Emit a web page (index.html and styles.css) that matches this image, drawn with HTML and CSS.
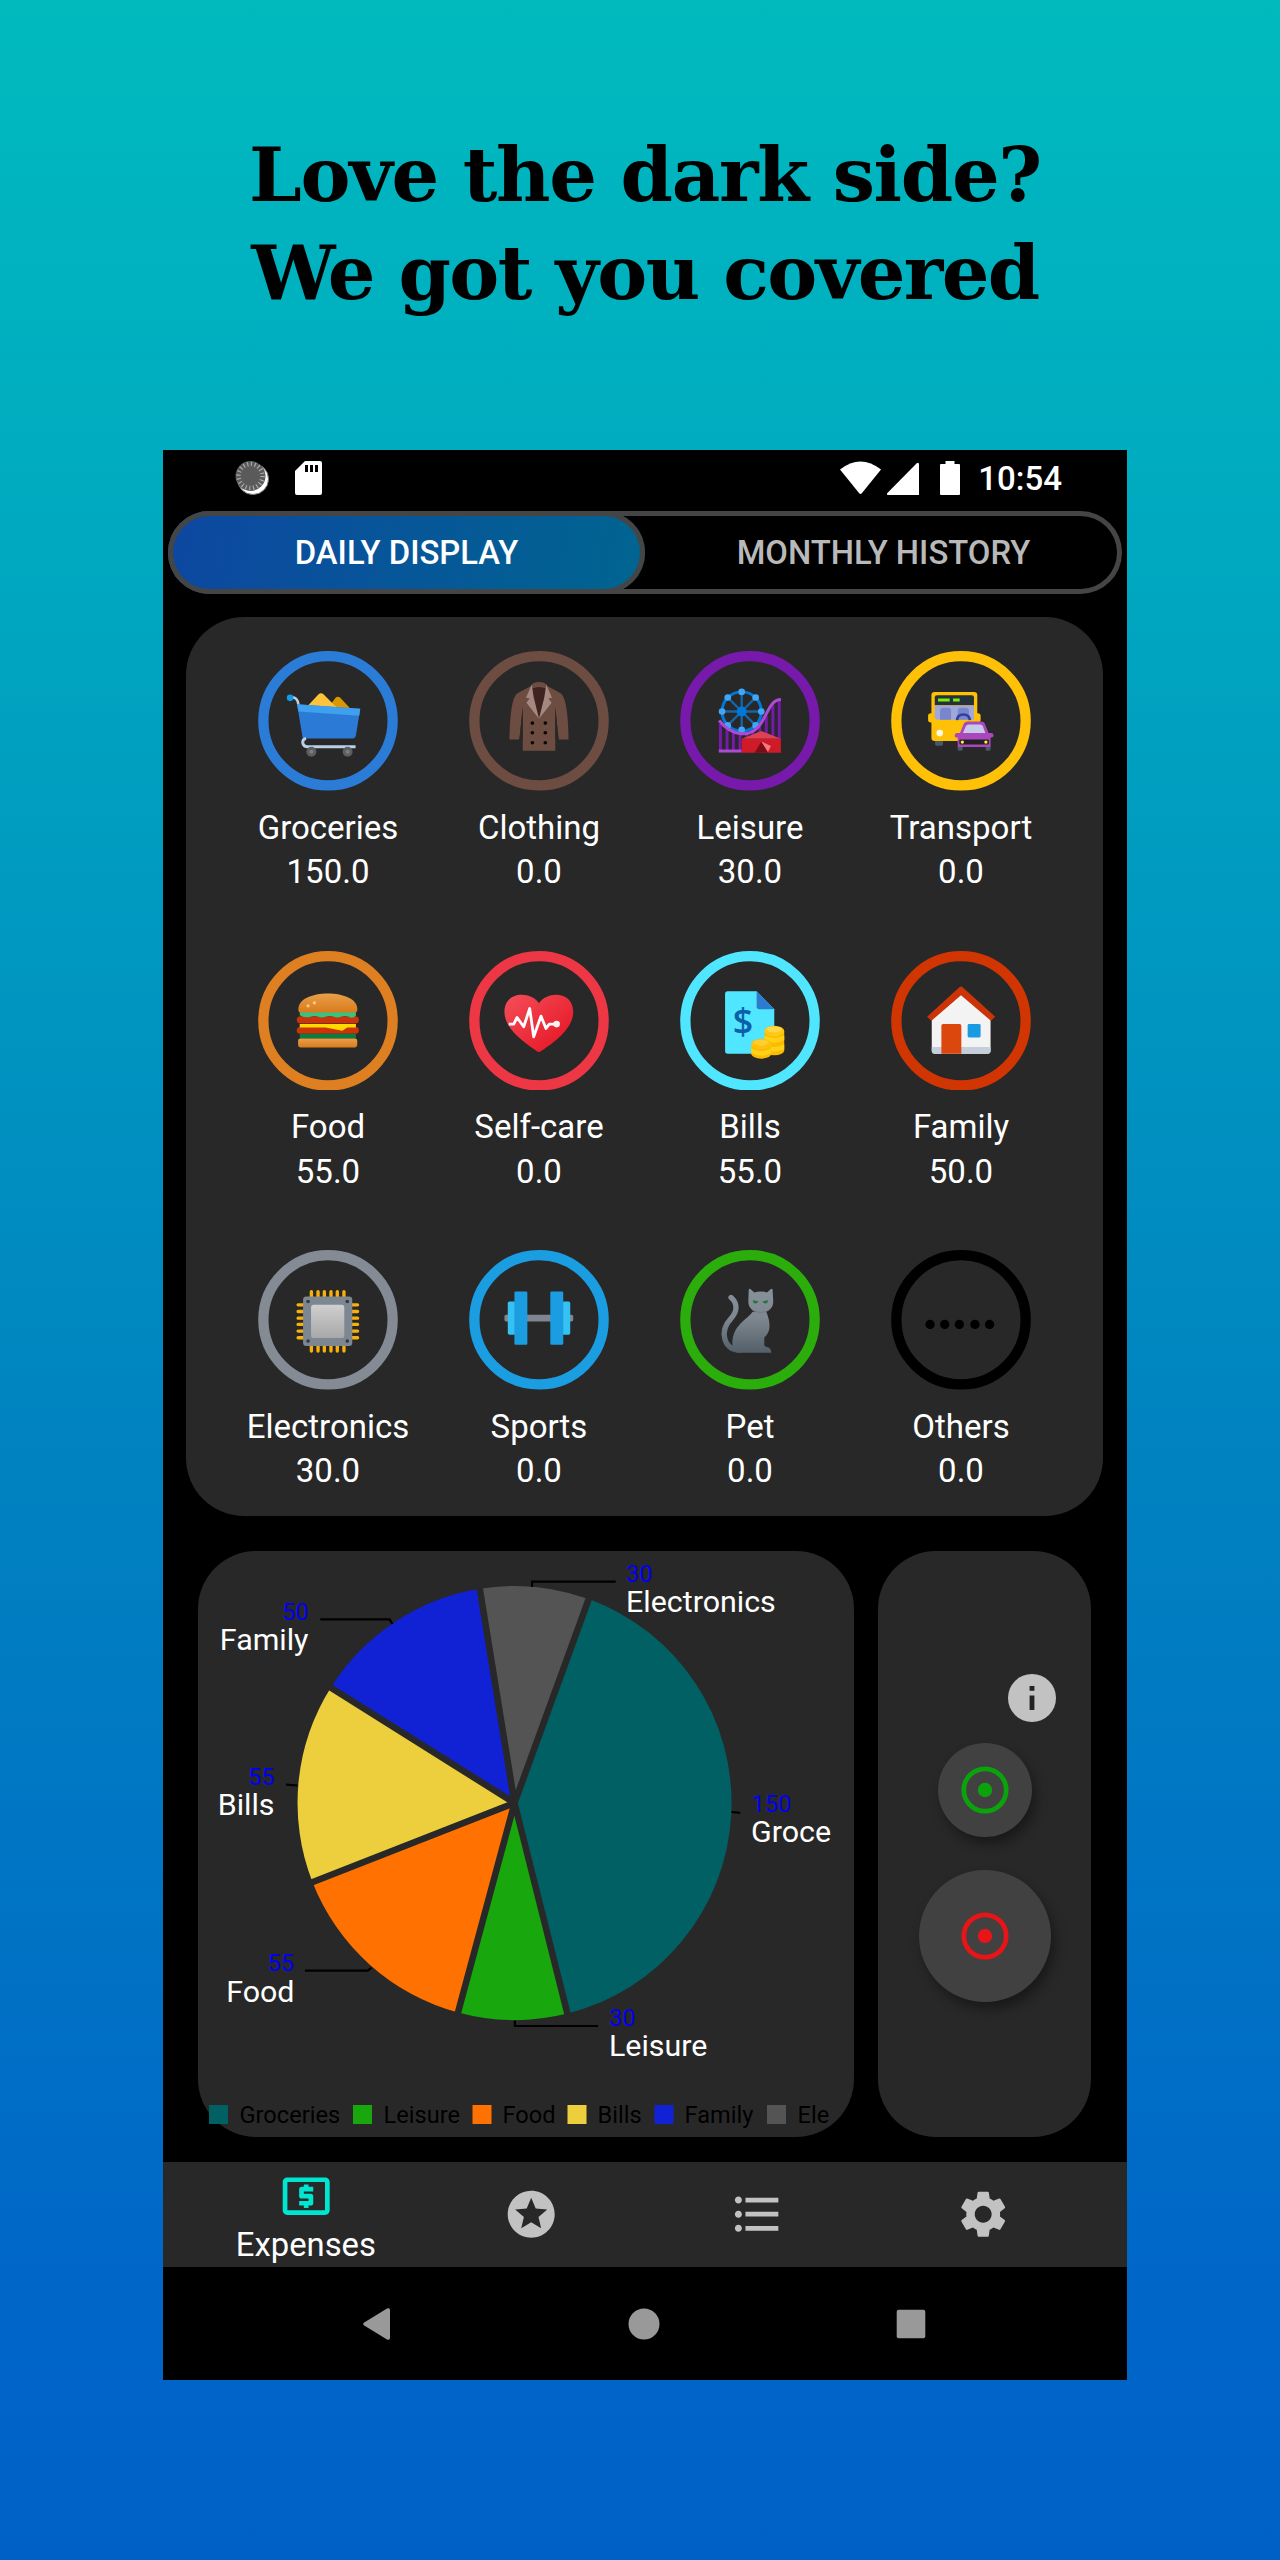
FILE: index.html
```html
<!DOCTYPE html>
<html lang="en">
<head>
<meta charset="utf-8">
<title>Expenses – dark theme</title>
<link rel="stylesheet" href="styles.css">
</head>
<body>
<main class="poster">
  <h1 class="headline"><span class="line-one">Love the dark side?</span><br><span class="line-two">We got you covered</span></h1>

  <section class="phone">
    <header class="status">
      <svg class="status-left" width="100" height="40" viewBox="231 458 100 40">
        <circle cx="253" cy="479" r="15.5" fill="#fff" stroke="#777" stroke-width="1"/>
        <circle cx="250.5" cy="476" r="15" fill="#5a5a5a"/>
        <circle cx="250.5" cy="476" r="12" fill="none" stroke="#aaa" stroke-width="4.5" stroke-dasharray="1.2 2.57"/>
        <path fill="#fff" d="M305 461H320a2 2 0 0 1 2 2V493a2 2 0 0 1-2 2H297a2 2 0 0 1-2-2V471Z"/>
        <path fill="#000" d="M305 465h3v7h-3zM310 465h3v7h-3zM315 465h3v7h-3z"/>
      </svg>
      <div class="status-right">
        <svg width="122" height="40" viewBox="839 458 122 40" fill="#fff">
          <path d="M840 469.500Q860.500 453.500 881 469.500L862 493Q860.500 494.800 859 493Z"/>
          <path d="M887.400 493L916.500 463.500Q919 461.800 919 464.500V495H888.500Q886 495 887.400 493Z"/>
          <path d="M945.500 461h9v3h4.500q1 0 1 1v29q0 1-1 1h-18q-1 0-1-1v-29q0-1 1-1h4.500z"/>
        </svg>
        <span class="clock">10:54</span>
      </div>
    </header>

    <div class="tabs">
      <div class="tab tab-active">DAILY DISPLAY</div>
      <div class="tab">MONTHLY HISTORY</div>
    </div>

    <div class="categories">
      <div class="category">
        <svg viewBox="237 123 420 420">
          <circle class="ring" cx="447" cy="333" r="194.500" stroke="#2b7cd6"/>
          <path d="M448 293L470 264Q476 258 484 264L514 296Z" fill="#d99800"/>
          <path d="M384 290L418 254Q426 246 434 254L474 294Z" fill="#fcc43c"/>
          <path d="M335 263Q356 260 358 285" fill="none" stroke="#b9cfe6" stroke-width="8"/>
          <circle cx="333" cy="264" r="10" fill="#149be6"/>
          <path d="M354 283L544 297L531 377Q529 386 520 386H371Z" fill="#2b7bd6"/>
          <path d="M354 283L544 297L541 318L358 305Z" fill="#3ea0ee"/>
          <path d="M381 386Q370 388 371 399Q373 411 386 411H530" fill="none" stroke="#b9cfe6" stroke-width="9"/>
          <circle cx="397" cy="426" r="15" fill="#5b5f62"/><circle cx="397" cy="426" r="6" fill="#7b7f82"/>
          <circle cx="506" cy="426" r="15" fill="#5b5f62"/><circle cx="506" cy="426" r="6" fill="#7b7f82"/>
        </svg>
        <span>Groceries</span><span>150.0</span>
      </div>
      <div class="category">
        <svg viewBox="869 123 420 420">
          <circle class="ring" cx="1079" cy="333" r="194.500" stroke="#6d4c41"/>
          <path d="M1055 228Q1060 216 1079 216Q1098 216 1104 228L1144 250Q1166 264 1168 389H1138L1128 294V423H1030V294L1020 389H990Q992 264 1014 250Z" fill="#6d4c41"/>
          <path d="M1058 236Q1079 226 1100 236L1094 290L1079 325L1066 290Z" fill="#3e2320"/>
          <path d="M1057 224L1040 264L1051 266L1041 279L1079 327L1063 262ZM1101 224L1118 264L1107 266L1117 279L1079 327L1095 262Z" fill="#a58880"/>
          <path d="M1030 290V389H1020ZM1128 290V389H1138Z" fill="#282828"/>
          <g fill="#080504"><circle cx="1059" cy="340" r="5.500"/><circle cx="1098" cy="340" r="5.500"/><circle cx="1059" cy="369" r="5.500"/><circle cx="1098" cy="369" r="5.500"/><circle cx="1059" cy="399" r="5.500"/><circle cx="1098" cy="399" r="5.500"/></g>
        </svg>
        <span>Clothing</span><span>0.0</span>
      </div>
      <div class="category">
        <svg viewBox="152 123 420 420">
          <circle class="ring" cx="362" cy="333" r="194.500" stroke="#7719aa"/>
          <circle cx="337" cy="305" r="59" fill="none" stroke="#0078d7" stroke-width="9"/>
          <path d="M337 246V364M278 305H396M295 263L379 347M379 263L295 347" stroke="#1565a8" stroke-width="7"/>
          <circle cx="337" cy="305" r="15" fill="#0078d7"/>
          <g fill="#42a5f5"><circle cx="337" cy="246" r="10"/><circle cx="295" cy="263" r="10"/><circle cx="379" cy="263" r="10"/><circle cx="278" cy="305" r="10"/><circle cx="396" cy="305" r="10"/><circle cx="295" cy="347" r="10"/><circle cx="379" cy="347" r="10"/><circle cx="337" cy="360" r="10"/></g>
          <path d="M273 342V422M293 355V422M312 366V422M332 371V422M352 371V380M371 365V380M391 350V372M411 318V375M431 285V380M450 270V390" stroke="#7719aa" stroke-width="9"/>
          <path d="M269 332C310 382 360 382 388 350C415 318 420 270 455 269" fill="none" stroke="#ae4bd5" stroke-width="9"/>
          <path d="M268 424H337" stroke="#ae4bd5" stroke-width="9"/>
          <path d="M337 387L396 364L455 387Z" fill="#dc4251"/>
          <path d="M337 387H455V429H337Z" fill="#cf1a28"/>
          <path d="M376 429L396 395L416 429Z" fill="#7d0d14"/>
          <path d="M396 395L425 409L416 427Z" fill="#f07983"/>
        </svg>
        <span>Leisure</span><span>30.0</span>
      </div>
      <div class="category">
        <svg viewBox="784 123 420 420">
          <circle class="ring" cx="994" cy="333" r="194.500" stroke="#ffc107"/>
          <rect x="916" y="388" width="24" height="20" rx="5" fill="#455a64"/>
          <rect x="895" y="310" width="158" height="28" rx="8" fill="#ffc107"/>
          <rect x="905" y="246" width="138" height="148" rx="10" fill="#ffc107"/>
          <path d="M915 286V262Q915 256 922 256H1026Q1033 256 1033 262V286Z" fill="#263238"/>
          <path d="M925 266H960V275H925ZM970 266H990V275H970Z" fill="#76ee12"/>
          <path d="M915 287H1033V330H924Q915 330 915 320Z" fill="#9fa8da"/>
          <path d="M931 330V304Q931 294 941 294H954Q964 294 964 304V330ZM984 330V304Q984 294 994 294H1008Q1018 294 1018 304V330Z" fill="#7986cb"/>
          <path d="M982 331Q983 314 1001 314Q1019 314 1021 331" fill="none" stroke="#303f9f" stroke-width="8"/>
          <circle cx="930" cy="370" r="10" fill="#fff9e0"/>
          <rect x="984" y="408" width="15" height="15" rx="4" fill="#455a64"/><rect x="1068" y="408" width="15" height="15" rx="4" fill="#455a64"/>
          <path d="M984 412V383H980Q974 383 975 377Q975 371 981 370H991L1001 345Q1005 335 1014 335H1055Q1064 335 1067 345L1077 370H1086Q1092 371 1092 377Q1092 383 1086 383H1083V412Z" fill="#ab47bc"/>
          <path d="M1000 370L1008 350Q1011 344 1017 344H1052Q1057 344 1060 350L1067 370Z" fill="#c5cae9"/>
          <rect x="989" y="389" width="89" height="15" rx="3" fill="#222"/>
          <circle cx="998" cy="397" r="5" fill="#ffeb3b"/><circle cx="1069" cy="397" r="5" fill="#ffeb3b"/>
        </svg>
        <span>Transport</span><span>0.0</span>
      </div>

      <div class="category">
        <svg viewBox="237 61 420 420">
          <defs>
            <linearGradient id="bun" x1="0" y1="0" x2="0" y2="1"><stop offset="0" stop-color="#e8a04a"/><stop offset="1" stop-color="#d97b1c"/></linearGradient>
          </defs>
          <circle class="ring" cx="447" cy="271" r="194.500" stroke="#de7f22"/>
          <path d="M353 268Q353 258 364 257H529Q540 258 540 268Q540 279 529 279H364Q353 279 353 268Z" fill="#cb3308"/>
          <path d="M362 244H531V256Q520 266 508 258Q498 254 486 259Q474 264 463 258Q452 254 440 259Q428 264 416 258Q406 254 394 259Q380 264 362 254Z" fill="#33c481"/>
          <path d="M358 240C350 172 543 172 535 240Q534 246 529 246H364Q359 246 358 240Z" fill="url(#bun)"/>
          <circle cx="387" cy="226" r="5" fill="#ffc878"/><circle cx="406" cy="217" r="5" fill="#ffc878"/>
          <rect x="353" y="290" width="187" height="20" rx="10" fill="#cb3308"/>
          <path d="M362 281H531V291H505L490 301L440 291H362Z" fill="#ffd900"/>
          <path d="M362 310H531V324H362Z" fill="#0b7d40"/>
          <rect x="357" y="324" width="178" height="27" rx="7" fill="url(#bun)"/>
        </svg>
        <span>Food</span><span>55.0</span>
      </div>
      <div class="category">
        <svg viewBox="869 61 420 420">
          <defs>
            <linearGradient id="heart" x1="0" y1="0" x2="1" y2="1"><stop offset="0" stop-color="#f44f5a"/><stop offset="1" stop-color="#e5101f"/></linearGradient>
          </defs>
          <circle class="ring" cx="1079" cy="271" r="194.500" stroke="#ee3744"/>
          <path d="M1079 218C1053 180 975 182 975 244C975 300 1045 342 1073 363Q1079 367 1085 363C1113 342 1182 300 1182 244C1182 182 1105 180 1079 218Z" fill="url(#heart)"/>
          <path d="M988 281H1003L1013 261L1033 289L1051 234L1063 319L1085 257L1100 294L1110 281H1130" fill="none" stroke="#fff" stroke-width="8.500" stroke-linejoin="round"/>
          <circle cx="1132" cy="281" r="10" fill="#fff0f0"/>
        </svg>
        <span>Self-care</span><span>0.0</span>
      </div>
      <div class="category">
        <svg viewBox="152 61 420 420">
          <circle class="ring" cx="362" cy="271" r="194.500" stroke="#50e6ff"/>
          <path d="M295 182H382L435 236V370H295Q287 370 287 362V190Q287 182 295 182Z" fill="#50e6ff"/>
          <path d="M382 182L435 236H390Q382 236 382 228Z" fill="#2b7bd1"/>
          <text x="341" y="311" class="bill-sign">$</text>
          <path d="M406 301V362Q410 374 435 375Q461 374 465 362V301Z" fill="#fabb00"/>
          <path d="M406 315Q435 330 465 315V329Q435 345 406 329ZM406 342Q435 357 465 342V357Q435 372 406 357Z" fill="#ffd119"/>
          <ellipse cx="435" cy="302" rx="30" ry="16" fill="#ffc814"/>
          <ellipse cx="435" cy="297" rx="22" ry="9" fill="#ffd84a"/>
          <path d="M366 341V372Q370 384 396 385Q422 384 426 372V341Z" fill="#fabb00"/>
          <path d="M366 354Q396 370 426 354V368Q396 384 366 368Z" fill="#ffd119"/>
          <ellipse cx="396" cy="341" rx="30" ry="16" fill="#ffc20a"/>
          <ellipse cx="396" cy="337" rx="22" ry="9" fill="#ffcf30"/>
        </svg>
        <span>Bills</span><span>55.0</span>
      </div>
      <div class="category">
        <svg viewBox="784 61 420 420">
          <circle class="ring" cx="994" cy="271" r="194.500" stroke="#d13602"/>
          <path d="M906 262L994 185L1083 262V361Q1083 370 1074 370H915Q906 370 906 361Z" fill="#f3f3f3"/>
          <path d="M906 350H1083V361Q1083 370 1074 370H915Q906 370 906 361Z" fill="#c5cfdb"/>
          <path d="M935 370V286Q935 281 940 281H990Q995 281 995 286V370Z" fill="#dc470d"/>
          <rect x="1014" y="281" width="39" height="40" rx="4" fill="#199be2"/>
          <path d="M892 259L989 170Q994 166 999 170L1097 259L1084 271L994 194L905 271Z" fill="#cb3409"/>
        </svg>
        <span>Family</span><span>50.0</span>
      </div>

      <div class="category">
        <svg viewBox="237 60 420 420">
          <defs>
            <linearGradient id="die" x1="0" y1="0" x2="0" y2="1"><stop offset="0" stop-color="#cfcfcf"/><stop offset="1" stop-color="#a8a8a8"/></linearGradient>
          </defs>
          <circle class="ring" cx="447" cy="270" r="194.500" stroke="#848b94"/>
          <path d="M397 185V364M417 185V364M436 185V364M456 185V364M475 185V364M495 185V364M357 225H536M357 245H536M357 265H536M357 284H536M357 304H536M357 324H536" stroke="#f9b10a" stroke-width="10" stroke-linecap="round"/>
          <rect x="372" y="200" width="148" height="149" rx="10" fill="#7d8791"/>
          <g fill="#36393d"><circle cx="387" cy="215" r="5.500"/><circle cx="505" cy="215" r="5.500"/><circle cx="387" cy="334" r="5.500"/><circle cx="505" cy="334" r="5.500"/></g>
          <rect x="396" y="225" width="100" height="100" rx="8" fill="url(#die)"/>
        </svg>
        <span>Electronics</span><span>30.0</span>
      </div>
      <div class="category">
        <svg viewBox="869 60 420 420">
          <circle class="ring" cx="1079" cy="270" r="194.500" stroke="#1b9de2"/>
          <rect x="975" y="255" width="207" height="20" rx="5" fill="#7f8691"/>
          <rect x="985" y="215" width="24" height="100" rx="5" fill="#35c1f1"/><rect x="1149" y="215" width="24" height="100" rx="5" fill="#35c1f1"/>
          <rect x="1005" y="185" width="39" height="160" rx="4" fill="#1b9de2"/><rect x="1113" y="185" width="39" height="160" rx="4" fill="#1b9de2"/>
        </svg>
        <span>Sports</span><span>0.0</span>
      </div>
      <div class="category">
        <svg viewBox="152 60 420 420">
          <defs>
            <linearGradient id="fur" gradientUnits="userSpaceOnUse" x1="0" y1="177" x2="0" y2="369"><stop offset="0" stop-color="#889099"/><stop offset=".45" stop-color="#7f8891"/><stop offset="1" stop-color="#536069"/></linearGradient>
          </defs>
          <circle class="ring" cx="362" cy="270" r="194.500" stroke="#2bad0c"/>
          <path d="M305 203C326 221 324 246 304 267C270 303 282 361 330 361" fill="none" stroke="url(#fur)" stroke-width="16" stroke-linecap="round"/>
          <path d="M370 246H411C424 278 426 306 405 323V346Q405 351 412 352Q426 354 426 369H328Q309 369 309 346C308 285 352 272 370 246Z" fill="url(#fur)"/>
          <path d="M358 180Q360 174 364 178L375 188Q394 182 413 188L424 178Q429 174 430 180L432 215C432 260 357 260 357 215Z" fill="url(#fur)"/>
          <path d="M371 242Q394 253 417 242" fill="none" stroke="#68717a" stroke-width="2"/>
          <path d="M370 211L387 214Q385 221 378 221Q371 220 370 211ZM417 211L400 214Q402 221 409 221Q416 220 417 211Z" fill="#1d7548"/>
        </svg>
        <span>Pet</span><span>0.0</span>
      </div>
      <div class="category">
        <svg viewBox="784 62 420 420">
          <circle class="ring" cx="994" cy="272" r="194.500" stroke="#000"/>
          <circle cx="901" cy="286" r="14"/><circle cx="945" cy="286" r="14"/><circle cx="989" cy="286" r="14"/><circle cx="1036" cy="286" r="14"/><circle cx="1080" cy="286" r="14"/>
        </svg>
        <span>Others</span><span>0.0</span>
      </div>
    </div>

    <div class="summary">
      <div class="chart-card">
        <svg class="chart" viewBox="198.500 1551 656 586">
          <path fill="#006064" d="M515 1803L589.200 1599.100A217 217 0 0 1 567.900 2013.500Z"/>
          <path fill="#18a70c" d="M515 1803L567.900 2013.500A217 217 0 0 1 458.500 2012.500Z"/>
          <path fill="#ff7101" d="M515 1803L458.500 2012.500A217 217 0 0 1 313 1882.200Z"/>
          <path fill="#edcf3d" d="M515 1803L313 1882.200A217 217 0 0 1 331.200 1687.700Z"/>
          <path fill="#1122d5" d="M515 1803L331.200 1687.700A217 217 0 0 1 480.300 1588.800Z"/>
          <path fill="#545454" d="M515 1803L480.300 1588.800A217 217 0 0 1 589.200 1599.100Z"/>
          <path class="gaps" d="M515 1803L590.200 1596.300M515 1803L568.600 2016.400M515 1803L457.700 2015.400M515 1803L310.200 1883.300M515 1803L328.700 1686.100M515 1803L479.800 1585.800"/>
          <path class="leaders" d="M532.600 1587V1581.600H616.200M393 1624L390 1619.400H320.800M298 1785.500L286.500 1784.700M372 1967.600L368.400 1970.700H305.400M515.400 2020.500V2026H598.600M732 1812L740.700 1812.800"/>
          <g class="amount">
            <text x="626.500" y="1581.600">30</text>
            <text x="752" y="1812.400">150</text>
            <text x="609.500" y="2026.400">30</text>
            <g class="end"><text x="309" y="1619.800">50</text><text x="275" y="1785">55</text><text x="294.500" y="1971">55</text></g>
          </g>
          <g class="name">
            <text x="626.500" y="1612">Electronics</text>
            <text x="751.500" y="1842.300">Groce</text>
            <text x="609.500" y="2056.300">Leisure</text>
            <g class="end"><text x="309" y="1649.700">Family</text><text x="275" y="1815">Bills</text><text x="295" y="2001.500">Food</text></g>
          </g>
          <g>
            <rect x="209.500" y="2105" width="19" height="19" fill="#006064"/><rect x="353.500" y="2105" width="19" height="19" fill="#18a70c"/>
            <rect x="473" y="2105" width="19" height="19" fill="#ff7101"/><rect x="568" y="2105" width="19" height="19" fill="#edcf3d"/>
            <rect x="655" y="2105" width="19" height="19" fill="#1122d5"/><rect x="767.500" y="2105" width="19" height="19" fill="#545454"/>
          </g>
          <g class="legend">
            <text x="240" y="2123">Groceries</text><text x="384" y="2123">Leisure</text><text x="503" y="2123">Food</text><text x="598" y="2123">Bills</text><text x="685" y="2123">Family</text><text x="798" y="2123">Ele</text>
          </g>
        </svg>
      </div>

      <div class="side-card">
        <svg class="info" width="48" height="48" viewBox="2 2 20 20"><circle cx="12" cy="12" r="10" fill="#c2c2c2"/><path fill="#222" d="M11 7h2v2h-2zM11 11h2v6h-2z"/></svg>
        <div class="round small-round"><svg width="48" height="48" viewBox="0 0 48 48"><circle cx="24" cy="24" r="21.200" fill="none" stroke="#0ba30b" stroke-width="4.700"/><circle cx="24" cy="24" r="7.200" fill="#0ba30b"/></svg></div>
        <div class="round big-round"><svg width="48" height="48" viewBox="0 0 48 48"><circle cx="24" cy="24" r="21.200" fill="none" stroke="#e81416" stroke-width="4.700"/><circle cx="24" cy="24" r="7.200" fill="#e81416"/></svg></div>
      </div>
    </div>

    <nav class="bottom-nav">
      <div class="nav-item nav-active">
        <svg viewBox="0 0 24 24"><path d="M11 17h2v-1h1c.55 0 1-.45 1-1v-3c0-.55-.45-1-1-1h-3v-1h4V8h-2V7h-2v1h-1c-.55 0-1 .45-1 1v3c0 .55.45 1 1 1h3v1H9v2h2v1zm9-13H4c-1.110 0-1.990.89-1.990 2L2 18c0 1.110.89 2 2 2h16c1.110 0 2-.89 2-2V6c0-1.110-.89-2-2-2zm0 14H4V6h16v12z"/></svg>
        <span>Expenses</span>
      </div>
      <div class="nav-item"><svg viewBox="0 0 24 24"><path d="M11.990 2C6.470 2 2 6.480 2 12s4.470 10 9.990 10C17.520 22 22 17.520 22 12S17.520 2 11.990 2zm4.240 16L12 15.450 7.770 18l1.120-4.810-3.730-3.230 4.920-.42L12 5l1.920 4.530 4.920.42-3.730 3.230L16.230 18z"/></svg></div>
      <div class="nav-item"><svg viewBox="0 0 24 24"><path d="M4 10.500c-.83 0-1.500.67-1.500 1.500s.67 1.500 1.500 1.500 1.500-.67 1.500-1.500-.67-1.500-1.500-1.500zm0-6c-.83 0-1.500.67-1.500 1.500S3.170 7.500 4 7.500 5.500 6.830 5.500 6 4.830 4.500 4 4.500zm0 12c-.83 0-1.500.68-1.500 1.500s.68 1.500 1.500 1.500 1.500-.68 1.500-1.500-.67-1.500-1.500-1.500zM7 19h14v-2H7v2zm0-6h14v-2H7v2zm0-8v2h14V5H7z"/></svg></div>
      <div class="nav-item"><svg viewBox="0 0 24 24"><path d="M19.140 12.940c.04-.3.06-.61.06-.94 0-.32-.02-.64-.07-.94l2.030-1.580c.18-.14.23-.41.12-.61l-1.920-3.320c-.12-.22-.37-.29-.59-.22l-2.390.96c-.5-.38-1.030-.7-1.620-.94l-.36-2.540c-.04-.24-.24-.41-.48-.41h-3.840c-.24 0-.43.17-.47.41l-.36 2.540c-.59.24-1.130.57-1.620.94l-2.390-.96c-.22-.08-.47 0-.59.22L2.740 8.870c-.12.21-.08.47.12.61l2.030 1.580c-.05.3-.09.63-.09.94s.02.64.07.94l-2.030 1.580c-.18.14-.23.41-.12.61l1.920 3.320c.12.22.37.29.59.22l2.390-.96c.5.38 1.030.7 1.620.94l.36 2.540c.05.24.24.41.48.41h3.840c.24 0 .44-.17.47-.41l.36-2.540c.59-.24 1.130-.56 1.620-.94l2.390.96c.22.08.47 0 .59-.22l1.920-3.320c.12-.22.07-.47-.12-.61l-2.010-1.580zM12 15.600c-1.980 0-3.600-1.620-3.600-3.600s1.620-3.600 3.600-3.600 3.600 1.620 3.600 3.600-1.620 3.600-3.600 3.600z"/></svg></div>
    </nav>

    <footer class="system-nav">
      <svg width="34" height="34" viewBox="0 0 34 34"><path d="M3.800 15.800L27 1.600Q30 .3 30 3V31Q30 33.700 27 32.400L3.800 18.200Q2.300 17 3.800 15.800Z"/></svg>
      <svg width="34" height="34" viewBox="0 0 34 34"><circle cx="17" cy="17" r="15.500"/></svg>
      <svg width="34" height="34" viewBox="0 0 34 34"><rect x="2.700" y="2.700" width="28.600" height="28.600" rx="2"/></svg>
    </footer>
  </section>
</main>
</body>
</html>
```
FILE: styles.css
```css
* { box-sizing: border-box; }

body {
  margin: 0;
  font-family: Roboto, "Liberation Sans", sans-serif;
}

.poster {
  width: 1280px;
  height: 2560px;
  padding: 126px 153px 0 163px;
  background: linear-gradient(#00babe 0%, #00adc0 17%, #0083c0 56%, #0066c8 90%, #0060c6 100%);
}

.headline {
  height: 324px;
  margin: 0;
  font-family: "DejaVu Serif", serif;
  font-size: 75px;
  font-weight: 700;
  line-height: 98px;
  text-align: center;
  white-space: nowrap;
  color: #000;
}

.line-one { letter-spacing: -1.3px; }
.line-two { letter-spacing: -1.6px; }

.phone {
  display: flex;
  flex-direction: column;
  width: 964px;
  height: 1930px;
  background: #000;
}

.status {
  display: flex;
  justify-content: space-between;
  height: 61px;
  padding: 8px 65px 0 68px;
}

.status-right { display: flex; gap: 17px; }

.clock {
  color: #fff;
  font-size: 33px;
  font-weight: 500;
  line-height: 42px;
}

.tabs {
  display: flex;
  width: 954px;
  height: 83px;
  margin: 0 auto;
  border-radius: 42px;
  box-shadow: inset 0 0 0 5px #454545;
}

.tab {
  flex: 1;
  color: #b9b9b9;
  font-size: 32.8px;
  font-weight: 500;
  line-height: 84px;
  text-align: center;
}

.tab-active {
  border-radius: 42px;
  background: linear-gradient(100deg, #0d47a1, #006590);
  box-shadow: inset 0 0 0 5px #454545;
  color: #fff;
}

.categories {
  display: grid;
  grid-template-columns: repeat(4, 211px);
  grid-template-rows: repeat(3, 243.4px);
  row-gap: 56.2px;
  justify-content: center;
  width: 917px;
  height: 899px;
  margin: 23px auto 0 23px;
  padding-top: 34px;
  border-radius: 58px;
  background: #282828;
}

.category {
  display: flex;
  flex-direction: column;
  align-items: center;
  color: #fff;
  font-size: 33px;
  line-height: 44.4px;
}

.category svg {
  width: 140px;
  height: 140px;
  margin-bottom: 15px;
}

.ring { fill: none; stroke-width: 31px; }

.bill-sign {
  fill: #0d5fa9;
  font-family: "Open Sans", sans-serif;
  font-size: 108px;
  font-weight: 600;
  text-anchor: middle;
}

.summary {
  display: flex;
  gap: 24px;
  height: 586px;
  margin: 35px 0 25px 35px;
}

.chart-card {
  width: 656px;
  border-radius: 58px;
  background: #282828;
}

.chart {
  display: block;
  width: 656px;
  height: 586px;
  overflow: visible;
}

.gaps { fill: none; stroke: #282828; stroke-width: 6.5px; }
.leaders { fill: none; stroke: #000; stroke-width: 2.2px; }
.end { text-anchor: end; }
.amount { fill: #0000f5; font-size: 23.5px; }
.name { fill: #fff; font-size: 30.4px; }
.legend { fill: #000; font-size: 23.6px; }

.side-card {
  display: flex;
  flex-direction: column;
  align-items: center;
  width: 213px;
  padding-top: 122.5px;
  border-radius: 58px;
  background: #282828;
}

.info { margin-left: 94px; }

.round {
  display: flex;
  align-items: center;
  justify-content: center;
  border-radius: 50%;
  background: #414141;
  box-shadow: 4px 7px 12px rgba(0, 0, 0, .38);
}

.small-round { width: 94px; height: 94px; margin-top: 21px; }
.big-round { width: 132px; height: 132px; margin-top: 33px; }

.bottom-nav {
  display: flex;
  height: 105px;
  padding: 0 31px 0 30px;
  background: #282828;
}

.nav-item {
  display: flex;
  flex: 1;
  flex-direction: column;
  align-items: center;
  justify-content: center;
}

.nav-item svg { width: 56.4px; height: 56.4px; fill: #c2c2c2; }
.nav-active { justify-content: flex-start; padding-top: 6px; }
.nav-active svg { flex: none; fill: #00e5cf; }

.nav-active span {
  margin-top: -1px;
  color: #fff;
  font-size: 32.8px;
  line-height: 44px;
}

.system-nav {
  display: flex;
  align-items: center;
  justify-content: space-between;
  height: 113px;
  padding: 0 199px 0 197px;
}

.system-nav svg { fill: #999; }
```
